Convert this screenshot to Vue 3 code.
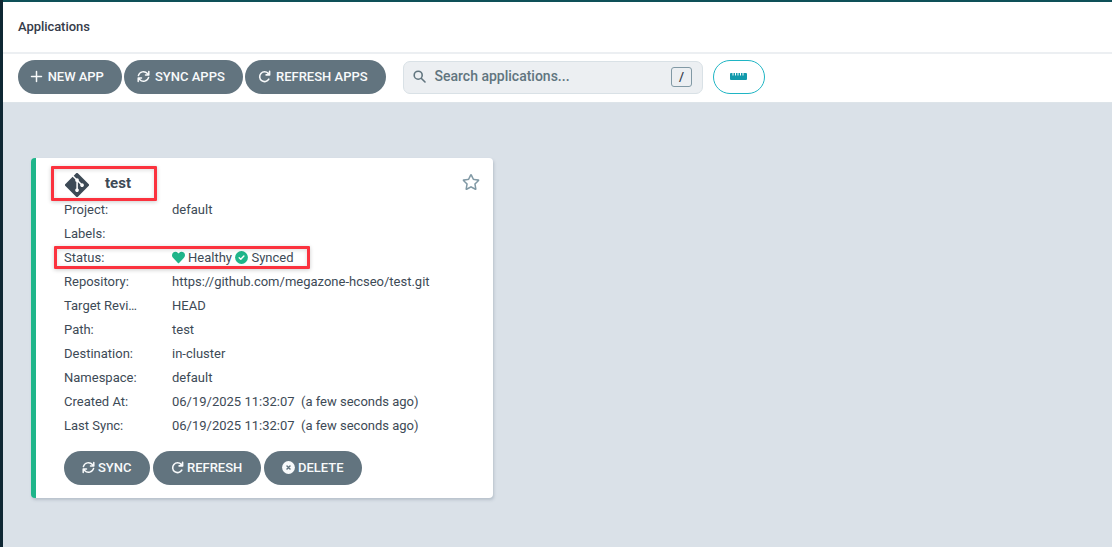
<script setup>
import { h } from 'vue'

const PATHS = {
  git: ['0 32 448 448', 'M439.55 236.05L244 40.45a28.87 28.87 0 0 0-40.81 0l-40.66 40.63 51.52 51.52c27.06-9.14 52.68 16.77 43.39 43.68l49.66 49.66c34.23-11.8 61.18 31 35.47 56.69-26.49 26.49-70.21-2.87-56-37.34L240.22 199v121.85c25.3 12.54 22.26 41.85 9.08 55a34.34 34.34 0 0 1-48.55 0c-17.57-17.6-11.07-46.91 11.25-56v-123c-20.8-8.51-24.6-30.74-18.64-45L142.57 101 8.45 235.14a28.86 28.86 0 0 0 0 40.81l195.61 195.6a28.86 28.86 0 0 0 40.8 0l194.69-194.69a28.86 28.86 0 0 0 0-40.81z'],
  heart: ['0 0 512 512', 'M462.3 62.6C407.5 15.9 326 24.3 275.7 76.2L256 96.5l-19.7-20.3C186.1 24.3 104.5 15.9 49.7 62.6c-62.8 53.6-66.1 149.8-9.9 207.9l193.5 199.8c12.5 12.9 32.8 12.9 45.3 0l193.5-199.8c56.3-58.1 53-154.3-9.8-207.9z'],
  star: ['0 0 576 512', 'M528.1 171.5L382 150.2 316.7 17.8c-11.7-23.6-45.6-23.9-57.4 0L194 150.2 47.9 171.5c-26.2 3.8-36.7 36.1-17.7 54.6l105.7 103-25 145.5c-4.5 26.3 23.2 46 46.4 33.7L288 439.6l130.7 68.7c23.2 12.2 50.9-7.4 46.4-33.7l-25-145.5 105.7-103c19-18.5 8.5-50.8-17.7-54.6zM388.6 312.3l23.7 138.4L288 385.4l-124.3 65.3 23.7-138.4-100.6-98 139-20.2 62.2-126 62.2 126 139 20.2-100.6 98z'],
}
const STROKES = {
  plus: ['M6.5 1.5v10M1.5 6.5h10', 1.5],
  sync: ['M1.4 5.6A5.2 5.2 0 0 1 10.4 3.6L11.4 4.6M11.8 1.6V4.9H8.5M11.6 7.4A5.2 5.2 0 0 1 2.6 9.4L1.6 8.4M1.2 11.4V8.1H4.5', 1.5],
  refresh: ['M10.8 9.2A4.9 4.9 0 1 1 10.2 3.4L11.2 4.5M11.6 1.4V4.9H8.1', 1.6],
  search: ['M9.2 5.2a4 4 0 1 1-8 0a4 4 0 0 1 8 0zM8.2 8.2L12 12', 1.6],
}
const Icon = (props) => {
  if (PATHS[props.name]) {
    const [viewBox, d] = PATHS[props.name]
    return h('svg', { viewBox }, [h('path', { d, fill: 'currentColor' })])
  }
  const [d, w] = STROKES[props.name]
  return h('svg', { viewBox: '0 0 13 13' }, [
    h('path', { d, fill: 'none', stroke: 'currentColor', 'stroke-width': w, 'stroke-linecap': 'round', 'stroke-linejoin': 'round' }),
  ])
}
Icon.props = ['name']

const rows = [
  ['Project:', 'default'],
  ['Labels:', ''],
  ['Status:', null],
  ['Repository:', 'https://github.com/megazone-hcseo/test.git'],
  ['Target Revi…', 'HEAD'],
  ['Path:', 'test'],
  ['Destination:', 'in-cluster'],
  ['Namespace:', 'default'],
  ['Created At:', '06/19/2025 11:32:07 \u00a0(a few seconds ago)'],
  ['Last Sync:', '06/19/2025 11:32:07 \u00a0(a few seconds ago)'],
]
</script>

<template>
  <div class="page">
    <header class="title">Applications</header>
    <div class="toolbar">
      <button class="btn new"><Icon name="plus" class="ic" />NEW APP</button>
      <button class="btn syncs"><Icon name="sync" class="ic" />SYNC APPS</button>
      <button class="btn refreshes"><Icon name="refresh" class="ic" />REFRESH APPS</button>
      <div class="search">
        <Icon name="search" class="ic" />
        <span class="hint">Search applications...</span>
        <kbd>/</kbd>
      </div>
      <button class="ruler">
        <svg viewBox="0 0 17 7"><path fill="currentColor" d="M1 0H2.5V2.5H3.5V0H5V2.5H6V0H7.5V2.5H8.5V0H10V2.5H11V0H12.5V2.5H13.5V0H16A1 1 0 0 1 17 1V6A1 1 0 0 1 16 7H1A1 1 0 0 1 0 6V1A1 1 0 0 1 1 0Z" /></svg>
      </button>
    </div>
    <main>
      <article class="card">
        <div class="head">
          <Icon name="git" class="git" />
          <span class="name">test</span>
          <Icon name="star" class="star" />
        </div>
        <dl>
          <div v-for="[label, value] in rows" :key="label" class="row">
            <dt>{{ label }}</dt>
            <dd v-if="value !== null">{{ value }}</dd>
            <dd v-else class="status">
              <Icon name="heart" class="heart" /><span class="health">Healthy</span>
              <svg class="check" viewBox="0 0 13 13"><circle cx="6.5" cy="6.5" r="6.4" fill="currentColor" /><path d="M4.2 6.8L5.8 8.3L8.9 5" fill="none" stroke="#fff" stroke-width="1.4" stroke-linecap="round" stroke-linejoin="round" /></svg>
              <span>Synced</span>
            </dd>
          </div>
        </dl>
        <div class="actions">
          <button class="btn sync"><Icon name="sync" class="ic" />SYNC</button>
          <button class="btn refresh"><Icon name="refresh" class="ic" />REFRESH</button>
          <button class="btn delete">
            <svg class="ic" viewBox="0 0 13 13"><circle cx="6.5" cy="6.5" r="6.4" fill="currentColor" /><path d="M5 5L8 8M8 5L5 8" stroke="#62747f" stroke-width="1.5" stroke-linecap="round" /></svg>DELETE
          </button>
        </div>
        <div class="mark mark-name"></div>
        <div class="mark mark-status"></div>
      </article>
    </main>
  </div>
</template>

<style>
body { margin: 0; }
</style>

<style scoped>
.page {
  box-sizing: border-box;
  height: 547px;
  display: flex;
  flex-direction: column;
  border-left: 3px solid #0f2733;
  background: #dae1e8;
  color: #363c4a;
  font-family: Roboto, sans-serif;
  font-size: 13px;
  overflow: hidden;
}
.title {
  box-sizing: border-box;
  height: 54px;
  flex: none;
  padding-left: 15px;
  border-top: 2px solid #0e5058;
  border-bottom: 2px solid #eceff2;
  background: #fff;
  font-weight: 500;
  line-height: 50px;
  letter-spacing: -.06px;
}
.toolbar {
  box-sizing: border-box;
  height: 49px;
  flex: none;
  display: flex;
  align-items: center;
  padding: 0 0 2px 15px;
  border-bottom: 1px solid #dde4e9;
  background: #fff;
}
button { font: inherit; margin: 0; cursor: pointer; }
.btn {
  box-sizing: border-box;
  height: 34px;
  display: flex;
  align-items: center;
  padding: 0 0 2px 12px;
  border: 0;
  border-radius: 17px;
  background: #62747f;
  color: #f8fafb;
  font-weight: 500;
  white-space: nowrap;
}
.ic { width: 13px; height: 13px; flex: none; margin-right: 4px; }
.new { width: 104px; margin-right: 2px; letter-spacing: -.05px; }
.new .ic { margin-right: 4.7px; }
.syncs { width: 119px; margin-right: 2px; padding-left: 13px; }
.syncs .ic { margin-right: 5px; }
.refreshes { width: 141px; margin-right: 17px; padding-left: 13px; }
.refreshes .ic { margin-right: 5px; }
.search {
  box-sizing: border-box;
  width: 300px;
  height: 33px;
  display: flex;
  align-items: center;
  padding: 0 10px 0 9px;
  border: 1px solid #d9e1e6;
  border-radius: 7px;
  background: #eceff2;
  color: #61757f;
}
.search .ic { margin-top: -2px; }
.hint { margin: -2px 0 0 4.5px; font-size: 14px; font-weight: 500; }
kbd {
  box-sizing: border-box;
  width: 21px;
  height: 20px;
  margin-left: auto;
  border: 1px solid #8199a5;
  border-radius: 3px;
  color: #363c4a;
  font: 500 13px/18px Roboto, sans-serif;
  text-align: center;
}
.ruler {
  box-sizing: border-box;
  width: 52px;
  height: 34px;
  display: flex;
  align-items: center;
  justify-content: center;
  margin-left: 10px;
  padding: 0 1px 2px 0;
  border: 1px solid #1fb5c4;
  border-radius: 17px;
  background: #fff;
  color: #129aac;
}
.ruler svg { width: 17px; height: 7px; }
main { padding: 55px 0 0 28px; }
.card {
  position: relative;
  box-sizing: border-box;
  width: 462px;
  height: 340px;
  padding: 12px 13px 0 28px;
  border-left: 5px solid #1fb58a;
  border-radius: 4px;
  background: #fff;
  box-shadow: 1px 2px 3px rgba(80, 100, 115, .25);
  color: #3d4a56;
}
.head { height: 28px; display: flex; align-items: center; }
.git { width: 24px; height: 24px; margin: 2px 16px 0 1px; }
.name { font-size: 15px; font-weight: 700; line-height: 24px; margin-top: -2px; }
.star { width: 18px; height: 16px; margin: -4px 0 0 auto; color: #8199a5; }
dl { margin: 0; }
.row { height: 24px; display: flex; line-height: 24px; }
dt { width: 75px; margin-right: 33px; white-space: nowrap; }
dd { margin: 0; white-space: nowrap; }
.status { display: flex; align-items: center; }
.heart, .check { width: 13px; height: 13px; margin-top: -1px; color: #1fb58a; }
.health { margin: 0 3px; }
.check { margin-right: 3.5px; }
.actions { display: flex; gap: 3px; margin-top: 13px; }
.actions .btn { padding-left: 18px; }
.actions .ic { margin-right: 3px; }
.sync { width: 86px; }
.refresh { width: 108px; }
.delete { width: 98px; }
.mark {
  position: absolute;
  box-sizing: border-box;
  border: 3px solid #fb323e;
  border-radius: 1px;
  box-shadow: 0 1px 4px rgba(0, 0, 0, .2), inset 0 1px 4px rgba(0, 0, 0, .14);
}
.mark-name { left: 15px; top: 8px; width: 106px; height: 35px; }
.mark-status { left: 18px; top: 88px; width: 256px; height: 23px; }
</style>
